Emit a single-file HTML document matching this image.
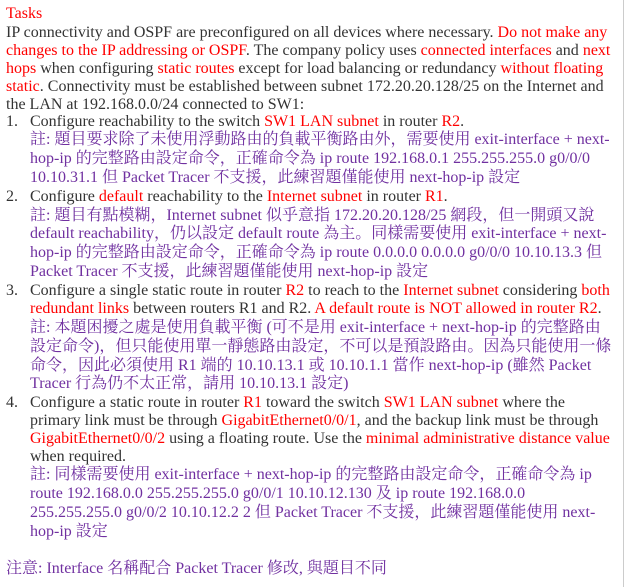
<!DOCTYPE html>
<html><head><meta charset="utf-8"><style>
html,body{margin:0;padding:0;background:#fff;width:627px;height:587px;overflow:hidden}
body{font-family:"Liberation Serif","Noto Serif CJK SC","Noto Sans CJK TC",serif;font-size:16px;color:#333}
.l{position:absolute;white-space:nowrap;line-height:20px;height:20px}
.r{color:#f00}.p{color:#7030a0}
.x{left:30px}.n{left:6px}
.edge{position:absolute;left:623px;top:0;width:1px;height:587px;background:#ccc}
</style></head><body>
<div class="l n r" style="top:4px">Tasks</div>
<div class="l n" style="top:23px">IP connectivity and OSPF are preconfigured on all devices where necessary. <span class="r">Do not make any</span></div>
<div class="l n" style="top:41px"><span class="r">changes to the IP addressing or OSPF</span>. The company policy uses <span class="r">connected interfaces</span> and <span class="r">next</span></div>
<div class="l n" style="top:59px"><span class="r">hops</span> when configuring <span class="r">static routes</span> except for load balancing or redundancy <span class="r">without floating</span></div>
<div class="l n" style="top:77px"><span class="r">static</span>. Connectivity must be established between subnet 172.20.20.128/25 on the Internet and</div>
<div class="l n" style="top:95px">the LAN at 192.168.0.0/24 connected to SW1:</div>
<div class="l n" style="top:112px">1.</div>
<div class="l x" style="top:112px">Configure reachability to the switch <span class="r">SW1 LAN subnet</span> in router <span class="r">R2</span>.</div>
<div class="l x p" style="top:130px">註: 題目要求除了未使用浮動路由的負載平衡路由外，需要使用 exit-interface + next-</div>
<div class="l x p" style="top:149px">hop-ip 的完整路由設定命令，正確命令為 ip route 192.168.0.1 255.255.255.0 g0/0/0</div>
<div class="l x p" style="top:168px">10.10.31.1 但 Packet Tracer 不支援，此練習題僅能使用 next-hop-ip 設定</div>
<div class="l n" style="top:187px">2.</div>
<div class="l x" style="top:187px">Configure <span class="r">default</span> reachability to the <span class="r">Internet subnet</span> in router <span class="r">R1</span>.</div>
<div class="l x p" style="top:206px">註: 題目有點模糊，Internet subnet 似乎意指 172.20.20.128/25 網段，但一開頭又說</div>
<div class="l x p" style="top:224px">default reachability，仍以設定 default route 為主。同樣需要使用 exit-interface + next-</div>
<div class="l x p" style="top:243px">hop-ip 的完整路由設定命令，正確命令為 ip route 0.0.0.0 0.0.0.0 g0/0/0 10.10.13.3 但</div>
<div class="l x p" style="top:262px">Packet Tracer 不支援，此練習題僅能使用 next-hop-ip 設定</div>
<div class="l n" style="top:281px">3.</div>
<div class="l x" style="top:281px">Configure a single static route in router <span class="r">R2</span> to reach to the <span class="r">Internet subnet</span> considering <span class="r">both</span></div>
<div class="l x" style="top:299px"><span class="r">redundant links</span> between routers R1 and R2. <span class="r">A default route is NOT allowed in router R2</span>.</div>
<div class="l x p" style="top:318px">註: 本題困擾之處是使用負載平衡 (可不是用 exit-interface + next-hop-ip 的完整路由</div>
<div class="l x p" style="top:337px">設定命令)，但只能使用單一靜態路由設定，不可以是預設路由。因為只能使用一條</div>
<div class="l x p" style="top:356px">命令，因此必須使用 R1 端的 10.10.13.1 或 10.10.1.1 當作 next-hop-ip (雖然 Packet</div>
<div class="l x p" style="top:374px">Tracer 行為仍不太正常，請用 10.10.13.1 設定)</div>
<div class="l n" style="top:393px">4.</div>
<div class="l x" style="top:393px">Configure a static route in router <span class="r">R1</span> toward the switch <span class="r">SW1 LAN subnet</span> where the</div>
<div class="l x" style="top:411px">primary link must be through <span class="r">GigabitEthernet0/0/1</span>, and the backup link must be through</div>
<div class="l x" style="top:429px"><span class="r">GigabitEthernet0/0/2</span> using a floating route. Use the <span class="r">minimal administrative distance value</span></div>
<div class="l x" style="top:447px">when required.</div>
<div class="l x p" style="top:465px">註: 同樣需要使用 exit-interface + next-hop-ip 的完整路由設定命令，正確命令為 ip</div>
<div class="l x p" style="top:484px">route 192.168.0.0 255.255.255.0 g0/0/1 10.10.12.130 及 ip route 192.168.0.0</div>
<div class="l x p" style="top:503px">255.255.255.0 g0/0/2 10.10.12.2 2 但 Packet Tracer 不支援，此練習題僅能使用 next-</div>
<div class="l x p" style="top:522px">hop-ip 設定</div>
<div class="l n p" style="top:559px">注意: Interface 名稱配合 Packet Tracer 修改, 與題目不同</div>
<div class="edge"></div>
</body></html>
